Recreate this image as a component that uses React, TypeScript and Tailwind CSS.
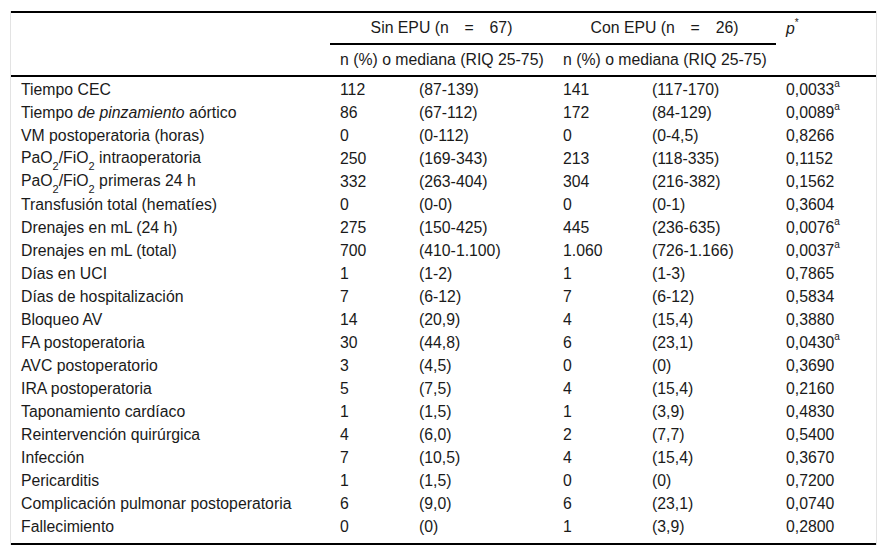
import React from 'react'

type Row = {
  label: React.ReactNode
  a: string
  ar: string
  b: string
  br: string
  p: string
  sig?: boolean
}

const PaFi = () => (
  <>
    PaO<sub className="text-[11px] align-[-4px] leading-none">2</sub>/FiO
    <sub className="text-[11px] align-[-4px] leading-none">2</sub>
  </>
)

const rows: Row[] = [
  { label: 'Tiempo CEC', a: '112', ar: '(87-139)', b: '141', br: '(117-170)', p: '0,0033', sig: true },
  {
    label: (
      <>
        Tiempo <i>de pinzamiento</i> aórtico
      </>
    ),
    a: '86',
    ar: '(67-112)',
    b: '172',
    br: '(84-129)',
    p: '0,0089',
    sig: true,
  },
  { label: 'VM postoperatoria (horas)', a: '0', ar: '(0-112)', b: '0', br: '(0-4,5)', p: '0,8266' },
  {
    label: (
      <>
        <PaFi /> intraoperatoria
      </>
    ),
    a: '250',
    ar: '(169-343)',
    b: '213',
    br: '(118-335)',
    p: '0,1152',
  },
  {
    label: (
      <>
        <PaFi /> primeras 24 h
      </>
    ),
    a: '332',
    ar: '(263-404)',
    b: '304',
    br: '(216-382)',
    p: '0,1562',
  },
  { label: 'Transfusión total (hematíes)', a: '0', ar: '(0-0)', b: '0', br: '(0-1)', p: '0,3604' },
  { label: 'Drenajes en mL (24 h)', a: '275', ar: '(150-425)', b: '445', br: '(236-635)', p: '0,0076', sig: true },
  { label: 'Drenajes en mL (total)', a: '700', ar: '(410-1.100)', b: '1.060', br: '(726-1.166)', p: '0,0037', sig: true },
  { label: 'Días en UCI', a: '1', ar: '(1-2)', b: '1', br: '(1-3)', p: '0,7865' },
  { label: 'Días de hospitalización', a: '7', ar: '(6-12)', b: '7', br: '(6-12)', p: '0,5834' },
  { label: 'Bloqueo AV', a: '14', ar: '(20,9)', b: '4', br: '(15,4)', p: '0,3880' },
  { label: 'FA postoperatoria', a: '30', ar: '(44,8)', b: '6', br: '(23,1)', p: '0,0430', sig: true },
  { label: 'AVC postoperatorio', a: '3', ar: '(4,5)', b: '0', br: '(0)', p: '0,3690' },
  { label: 'IRA postoperatoria', a: '5', ar: '(7,5)', b: '4', br: '(15,4)', p: '0,2160' },
  { label: 'Taponamiento cardíaco', a: '1', ar: '(1,5)', b: '1', br: '(3,9)', p: '0,4830' },
  { label: 'Reintervención quirúrgica', a: '4', ar: '(6,0)', b: '2', br: '(7,7)', p: '0,5400' },
  { label: 'Infección', a: '7', ar: '(10,5)', b: '4', br: '(15,4)', p: '0,3670' },
  { label: 'Pericarditis', a: '1', ar: '(1,5)', b: '0', br: '(0)', p: '0,7200' },
  { label: 'Complicación pulmonar postoperatoria', a: '6', ar: '(9,0)', b: '6', br: '(23,1)', p: '0,0740' },
  { label: 'Fallecimiento', a: '0', ar: '(0)', b: '1', br: '(3,9)', p: '0,2800' },
]

const cell = 'pl-[10px] text-left font-normal whitespace-nowrap'

export default function App() {
  return (
    <div className="bg-white w-[887px] h-[555px] pt-[11px] px-[10px] font-['Liberation_Sans',Arial,sans-serif] text-[15.8px] leading-[20px] text-[#1a1a1a]">
      <div className="border-x border-[#e3e3e3]">
        <table className="w-[865px] table-fixed border-collapse border-t-2 border-b-2 border-black">
          <colgroup>
            <col className="w-[319px]" />
            <col className="w-[79px]" />
            <col className="w-[144px]" />
            <col className="w-[89px]" />
            <col className="w-[134px]" />
            <col className="w-[100px]" />
          </colgroup>
          <thead>
            <tr className="h-[32px]">
              <th rowSpan={2} className={cell}></th>
              <th colSpan={2} className="text-center font-normal border-b-2 border-black">
                Sin EPU (n{'\u2003'}={'\u2003'}67)
              </th>
              <th colSpan={2} className="text-center font-normal border-b-2 border-black">
                Con EPU (n{'\u2003'}={'\u2003'}26)
              </th>
              <th className={cell}>
                <i>p</i>
                <sup className="text-[10px] align-[3px] leading-none">*</sup>
              </th>
            </tr>
            <tr className="h-[32px] border-b-2 border-black">
              <th colSpan={2} className={cell}>
                n (%) o mediana (RIQ 25-75)
              </th>
              <th colSpan={2} className={cell}>
                n (%) o mediana (RIQ 25-75)
              </th>
              <th className={cell}></th>
            </tr>
          </thead>
          <tbody>
            {rows.map((r, i) => {
              const first = i === 0
              const last = i === rows.length - 1
              const c = last ? `${cell} align-top pt-[2px]` : cell
              return (
                <tr key={i} className={last ? 'h-[29px]' : first ? 'h-[25px] pt-[2px]' : 'h-[23px]'}>
                  <td className={first ? `${c} pt-[2px]` : c}>{r.label}</td>
                  <td className={first ? `${c} pt-[2px]` : c}>{r.a}</td>
                  <td className={first ? `${c} pt-[2px]` : c}>{r.ar}</td>
                  <td className={first ? `${c} pt-[2px]` : c}>{r.b}</td>
                  <td className={first ? `${c} pt-[2px]` : c}>{r.br}</td>
                  <td className={first ? `${c} pt-[2px]` : c}>
                    {r.p}
                    {r.sig && <sup className="text-[10px] align-[3px] leading-none">a</sup>}
                  </td>
                </tr>
              )
            })}
          </tbody>
        </table>
      </div>
    </div>
  )
}
